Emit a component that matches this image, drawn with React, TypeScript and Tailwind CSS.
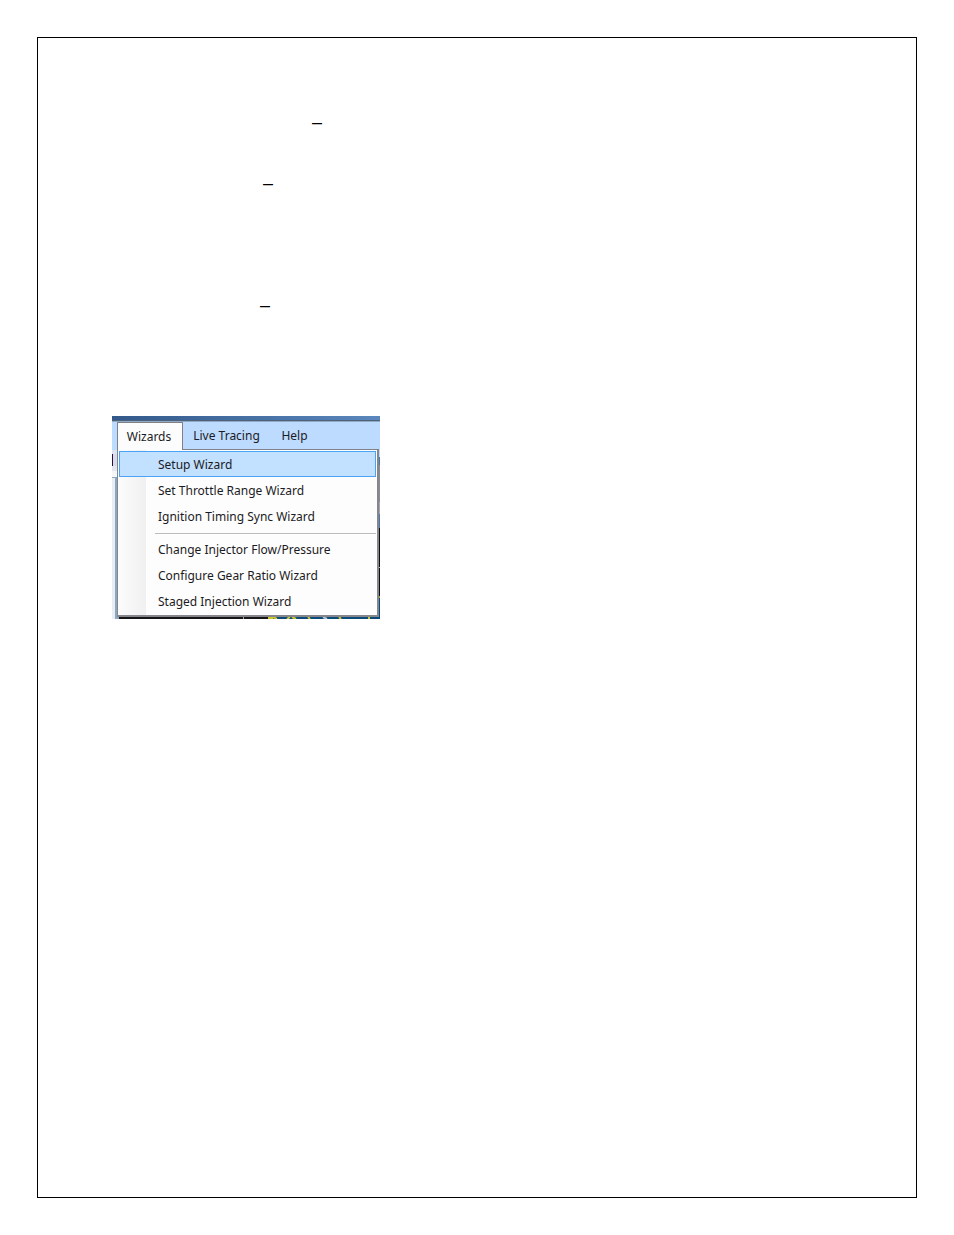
const MENU_GROUPS = [
  ['Setup Wizard', 'Set Throttle Range Wizard', 'Ignition Timing Sync Wizard'],
  ['Change Injector Flow/Pressure', 'Configure Gear Ratio Wizard', 'Staged Injection Wizard'],
]

function MenuItem({ label, selected }: { label: string; selected: boolean }) {
  return (
    <button
      role="menuitem"
      className={`flex h-[26px] w-full items-center border pt-[2px] pl-[38px] text-left ${
        selected ? 'border-[#4ba3f5] bg-[#c2e0ff]' : 'border-transparent'
      }`}
    >
      {label}
    </button>
  )
}

// slice of the toolbar and side panel left of the menu
function LeftEdge() {
  return (
    <div className="flex w-[5px] flex-col">
      <div className="h-1 bg-[#dce4f3]" />
      <div className="flex h-3 bg-[#d9dcea]">
        <div className="w-px bg-[#2c0f3c]" />
      </div>
      <div className="h-[5px] bg-[#e3e6ef]" />
      <div className="h-[6px] bg-[#f5f6f8]" />
      <div className="flex-1 border-t border-r-2 border-[#8ba7c1] bg-[#e9eef3]" />
    </div>
  )
}

// slice of the gauge window right of the menu
function RightEdge() {
  return (
    <div className="flex w-px flex-col">
      <div className="h-[7px] bg-[#bddaff]" />
      <div className="h-2 bg-[#3f7fa8]" />
      <div className="h-[37px] bg-[#8b8d91]" />
      <div className="h-3 bg-[#a3a5a8]" />
      <div className="h-[14px] bg-[#4d74ac]" />
      <div className="h-[39px] bg-[#0c0c0e]" />
      <div className="h-px bg-[#b5b5b5]" />
      <div className="h-7 bg-[#0c0c0e]" />
      <div className="h-[2px] bg-[#a8a432]" />
      <div className="flex-1 bg-[#0b4b7c]" />
    </div>
  )
}

function BottomEdge() {
  return (
    <svg className="block h-[2px] w-full" viewBox="0 0 268 2" preserveAspectRatio="none">
      <rect width="268" height="2" fill="#151515" />
      <rect width="4" height="2" fill="#e9eef3" />
      <rect x="3" width="4" height="2" fill="#8ba7c1" />
      <rect x="131" width="1" height="2" fill="#a0a0a0" />
      <rect x="159" width="109" height="2" fill="#0b4b7c" />
      <path
        d="M156 1h5M161 0l4 2M178 0l-3 2M180 0l4 2M196 0l2 2M227 0l2 2M257 0v2"
        stroke="#cfc62c"
        strokeWidth="2"
        fill="none"
      />
      <path d="M211 0l4 2" stroke="#b9c4cc" strokeWidth="2" />
    </svg>
  )
}

function WizardsMenu() {
  return (
    <div className="w-[268px] bg-[#bddaff] font-['Noto_Sans',sans-serif] text-xs text-[#1b1b24]">
      <div className="h-1 bg-linear-to-r from-[#33598b] to-[#5a87bd]" />
      <div className="h-[2px] border-t border-[#4f6277] bg-[#8fa9c9]" />
      <nav className="flex h-7 pl-[5px]">
        <button className="w-[66px] border-x border-t border-[#808186] bg-[#fcfcfd] pr-[2px]">
          Wizards
        </button>
        <button className="w-[87px] border-b border-[#808186] pt-px">Live Tracing</button>
        <button className="w-[49px] border-b border-[#808186] pt-px">Help</button>
        <div className="mr-px flex-1 border-b border-[#808186]" />
      </nav>
      <div className="flex">
        <LeftEdge />
        <div
          role="menu"
          className="flex-1 border-r-2 border-b-2 border-l border-[#85878c] bg-[#fdfdfd] bg-linear-to-r from-[#fcfcfc] to-[#f0f0f0] bg-[length:28px_100%] bg-no-repeat pt-px pr-px pb-px pl-px"
        >
          {MENU_GROUPS.map((group, i) => (
            <div key={group[0]}>
              {i > 0 && <div role="separator" className="mt-1 mb-[2px] ml-9 h-px bg-[#bdbdbd]" />}
              {group.map((label) => (
                <MenuItem key={label} label={label} selected={label === 'Setup Wizard'} />
              ))}
            </div>
          ))}
        </div>
        <RightEdge />
      </div>
      <BottomEdge />
    </div>
  )
}

export default function App() {
  return (
    <div className="flex min-h-screen bg-white p-[37px]">
      <main className="flex-1 border border-black px-[74px] pt-[69px]">
        {/* headings of the document, reduced to their dashes */}
        <div className="font-['Liberation_Sans',sans-serif] text-lg leading-[30px] text-black">
          <p className="pl-[200px]">–</p>
          <p className="pt-[31px] pl-[151px]">–</p>
          <p className="pt-[92px] pl-[148px]">–</p>
        </div>
        <div className="pt-24">
          <WizardsMenu />
        </div>
      </main>
    </div>
  )
}
